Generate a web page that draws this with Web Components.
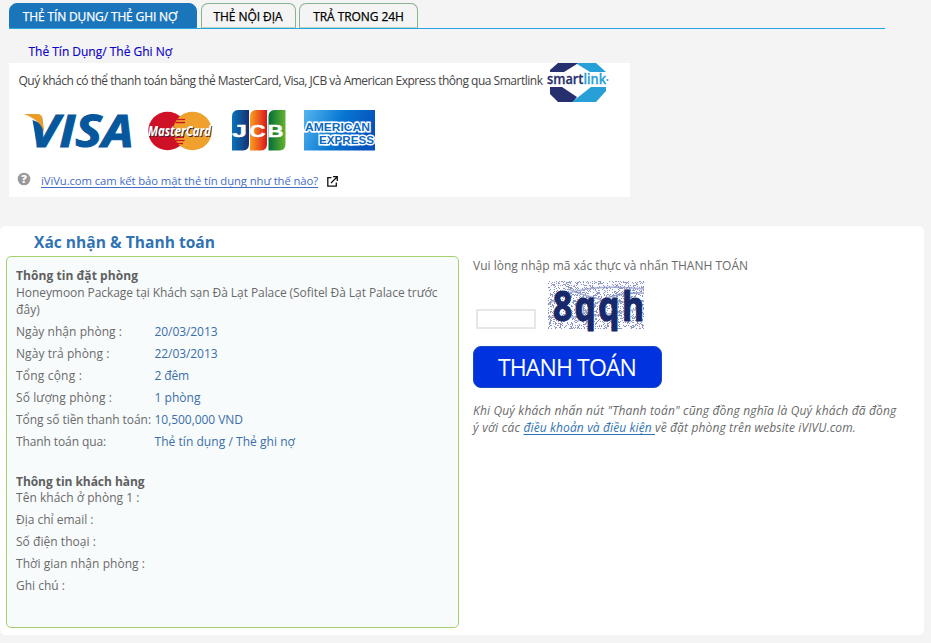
<!DOCTYPE html>
<html lang="vi">
<head>
<meta charset="utf-8">
<title>Thanh toán</title>
<style>
body{margin:0;background:#f4f4f4;font:12px "Open Sans","Noto Sans",sans-serif;color:#6a6a6a;width:931px;height:643px;overflow:hidden}
</style>
</head>
<body>
<payment-page></payment-page>
<script>
// One line of text whose tracking is adjusted to fill the measure given in "w".
class TextLine extends HTMLElement{
  connectedCallback(){
    const r=this.attachShadow({mode:'open'});
    r.innerHTML='<style>:host{display:block;white-space:pre}span{display:inline-block;text-decoration:inherit;text-underline-offset:inherit}</style><span><slot></slot></span>';
    const s=r.querySelector('span'),w=+this.getAttribute('w');
    if(w){const n=this.textContent.length;s.style.letterSpacing=((w-s.getBoundingClientRect().width)/n).toFixed(4)+'px';}
  }
}

class TabItem extends HTMLElement{
  connectedCallback(){
    this.attachShadow({mode:'open'}).innerHTML=`<style>
    :host{display:flex;box-sizing:border-box;height:25px;border:1px solid #86b48e;border-bottom-color:#b9d3bd;border-radius:7px 7px 0 0;color:#000;justify-content:center;font-weight:500;font-size:12px;line-height:25px;background:#f4f4f4;-webkit-text-stroke:.25px}
    :host([active]){background:#1b75bb;border-color:#1b75bb;color:#fff;border-radius:8px 8px 0 0;padding-right:6px}
    </style><slot></slot>`;
  }
}

class TabBar extends HTMLElement{
  connectedCallback(){
    this.attachShadow({mode:'open'}).innerHTML=`<style>
    :host{display:grid;grid-template-columns:188px 95px 119px;column-gap:3.5px;width:876px;height:26px;box-sizing:border-box;border-bottom:1px solid #27a4e4}
    </style>
    <tab-item active><text-line w="154.5">THẺ TÍN DỤNG/ THẺ GHI NỢ</text-line></tab-item>
    <tab-item><text-line w="69">THẺ NỘI ĐỊA</text-line></tab-item>
    <tab-item><text-line w="90.5">TRẢ TRONG 24H</text-line></tab-item>`;
  }
}

class SmartlinkLogo extends HTMLElement{
  connectedCallback(){
    this.attachShadow({mode:'open'}).innerHTML=`<style>:host{display:block;height:40px}svg{display:block;overflow:visible}</style>
    <svg width="64" height="40" viewBox="545 63 64 40">
    <path fill="#27306f" d="M558 63h20l-7 9h-21v-2z"/><path fill="#27a0d8" d="M578 63h18l10 9h-19l-10-7z"/>
    <path fill="#27306f" d="M550 87h12l15 10-4 5h-15l-8-8z"/><path fill="#27a0d8" d="M591 87h15v4l-10 11h-24z"/>
    <path fill="#fff" d="M564 72l13-8 13 8z"/>
    <text x="547" y="84" font-family="Open Sans" font-weight="600" font-size="14.5" fill="#27306f" stroke="#27306f" stroke-width=".3" textLength="59" lengthAdjust="spacingAndGlyphs">smart<tspan fill="#27a0d8" stroke="#27a0d8">link</tspan></text>
    <circle cx="607.5" cy="80" r="1" fill="#27a0d8"/></svg>`;
  }
}

class CardLogos extends HTMLElement{
  connectedCallback(){
    this.attachShadow({mode:'open'}).innerHTML=`<style>:host{display:block;height:50px}svg{display:block;overflow:visible}</style>
    <svg width="370" height="50" viewBox="20 105 370 50" font-family="Open Sans">
    <defs>
    <linearGradient id="b"><stop stop-color="#0a74bb"/><stop offset="1" stop-color="#173072"/></linearGradient>
    <linearGradient id="r"><stop stop-color="#f9a01b"/><stop offset=".55" stop-color="#ea5520"/><stop offset="1" stop-color="#d8141c"/></linearGradient>
    <linearGradient id="g"><stop stop-color="#006d3a"/><stop offset="1" stop-color="#65b32e"/></linearGradient>
    <linearGradient id="a" x2="1" y2=".25"><stop stop-color="#55b5ee"/><stop offset=".55" stop-color="#0877d2"/><stop offset="1" stop-color="#0453bd"/></linearGradient>
    </defs>
    <text x="29.500" y="146.500" font-size="45" font-weight="700" font-style="italic" fill="#07579d" stroke="#07579d" textLength="104" lengthAdjust="spacingAndGlyphs">VISA</text>
    <path fill="#fff" d="M28 111h15.500l-2 13-8-1z"/>
    <path fill="#07579d" d="M32.500 120l3.500 20 6-8 .5-8z"/>
    <path fill="#eb9c27" d="M23.500 114h13c4.500 0 5.500 2 6 5l2 14c-3-9-9-15-21-19z"/>
    <circle cx="167.500" cy="131" r="19.300" fill="#ce1126"/><circle cx="192.500" cy="131" r="19.300" fill="#f0a02c"/>
    <path d="M177 119.500h8M175.500 122.500h9.500M174.500 137.500h9.500M175.500 140.500h9M177 143.500h6" stroke="#ce1126" stroke-width="1.500"/>
    <path d="M180 118h5M178 121h7M178 139h6M178 142h5" stroke="#f0a02c" stroke-width="1"/>
    <text x="148" y="136" font-size="13.500" font-weight="700" font-style="italic" fill="#fff" textLength="63" lengthAdjust="spacingAndGlyphs" style="text-shadow:1px 1px 0 #3a2530">MasterCard</text>
    <path fill="url(#b)" d="M238 110h11v34q0 6-6 6.500h-11v-34q0-6 6-6.500z"/>
    <path fill="url(#r)" d="M256 110h11v34q0 6-6 6.500h-11v-34q0-6 6-6.500z"/>
    <path fill="url(#g)" d="M274.500 110h11v34q0 6-6 6.500h-11v-34q0-6 6-6.500z"/>
    <g font-family="Liberation Sans" font-size="17" font-weight="700" fill="#fff" stroke="#fff" stroke-width=".4">
    <text x="232" y="136.500" textLength="15" lengthAdjust="spacingAndGlyphs">J</text>
    <text x="249.500" y="136.500" textLength="16" lengthAdjust="spacingAndGlyphs">C</text>
    <text x="267.500" y="136.500" textLength="16" lengthAdjust="spacingAndGlyphs">B</text></g>
    <path fill="url(#a)" d="M304 110h71v40.500h-71z"/>
    <g font-family="Liberation Sans" font-size="11.500" font-weight="700" fill="#0a69c3" stroke="#fff" stroke-width="2.800" paint-order="stroke" stroke-linejoin="miter">
    <text x="305" y="130.500" textLength="65" lengthAdjust="spacingAndGlyphs">AMERICAN</text>
    <text x="319" y="144" textLength="55" lengthAdjust="spacingAndGlyphs">EXPRESS</text></g>
    </svg>`;
  }
}

class MethodPanel extends HTMLElement{
  connectedCallback(){
    this.attachShadow({mode:'open'}).innerHTML=`<style>
    :host{display:grid;grid-template-rows:42px 50px 41px;width:621px;height:133.500px;background:#fff}
    .t{display:flex;gap:2px;color:#444;padding-left:9.5px}.t text-line{line-height:36px}
    card-logos{padding-left:11px}
    .q{display:flex;align-items:flex-start;padding:16px 0 0 8px}
    .q text-line{font-size:11.3px;line-height:20px;color:#446cc8;text-decoration:underline;text-decoration-skip-ink:none;text-underline-offset:2px;margin:0 9px 0 10px}
    .q svg{overflow:visible}.q svg:first-child{margin-top:1px}.q svg:last-child{margin-top:5px}
    </style>
    <div class="t"><text-line w="524">Quý khách có thể thanh toán bằng thẻ MasterCard, Visa, JCB và American Express thông qua Smartlink</text-line><smartlink-logo></smartlink-logo></div>
    <card-logos></card-logos>
    <div class="q"><svg width="14" height="14"><circle cx="7" cy="7" r="6.300" fill="#999"/><text x="7" y="11" text-anchor="middle" font-family="Open Sans" font-size="11" font-weight="800" fill="#fff">?</text></svg>
    <text-line w="277">iViVu.com cam kết bảo mật thẻ tín dụng như thế nào?</text-line>
    <svg width="11" height="11" fill="none" stroke="#111" stroke-width="1.300"><path d="M4.500 1.700H.8v8.500h8.500V6.500M6 .7h4.300V5M10 1L4 7"/></svg></div>`;
  }
}

class DetailRow extends HTMLElement{
  connectedCallback(){
    this.attachShadow({mode:'open'}).innerHTML=`<style>:host{display:grid;grid-template-columns:138.500px 1fr;height:22px;line-height:22px}::slotted([slot=value]){color:#3a6ea9}</style><slot></slot><slot name="value"></slot>`;
  }
}

class BookingBox extends HTMLElement{
  connectedCallback(){
    const row=(l,w,v,x)=>`<detail-row><text-line w="${w}">${l}</text-line>${v?`<text-line slot="value" w="${x}">${v}</text-line>`:''}</detail-row>`;
    this.attachShadow({mode:'open'}).innerHTML=`<style>
    :host{display:block;box-sizing:border-box;width:453px;height:372px;border:1px solid #a6d06c;border-radius:5px;background:#f7fbfc;padding:11px 9px}
    .h{font-weight:700;line-height:16px;color:#606060}
    .p{line-height:17px}.b{margin-bottom:3px}.g{margin-top:21px}
    </style>
    <text-line class="h" w="122">Thông tin đặt phòng</text-line>
    <text-line class="p" w="421.5">Honeymoon Package tại Khách sạn Đà Lạt Palace (Sofitel Đà Lạt Palace trước</text-line>
    <text-line class="p b" w="24">đây)</text-line>
    ${row('Ngày nhận phòng :',106,'20/03/2013',63)}${row('Ngày trả phòng :',93.5,'22/03/2013',63)}${row('Tổng cộng :',66,'2 đêm',34.5)}${row('Số lượng phòng :',96,'1 phòng',46)}${row('Tổng số tiền thanh toán:',135,'10,500,000 VND',88.5)}${row('Thanh toán qua:',90,'Thẻ tín dụng / Thẻ ghi nợ',140.5)}
    <text-line class="h g" w="128.5">Thông tin khách hàng</text-line>
    <div style="margin-top:-3px">${row('Tên khách ở phòng 1 :',123.5)}${row('Địa chỉ email :',77.5)}${row('Số điện thoại :',80)}${row('Thời gian nhận phòng :',129)}${row('Ghi chú :',49)}</div>`;
  }
}

class CaptchaImage extends HTMLElement{
  connectedCallback(){
    // Seeded noise, so that every load draws the same speckles.
    let s=77,d='';const rnd=()=>(s=(s*16807)%2147483647)/2147483647;
    for(let i=0;i<1500;i++){const x=Math.floor(rnd()*96),y=Math.floor(rnd()*48);d+=`M${x} ${y}h1v1h-1z`;}
    this.attachShadow({mode:'open'}).innerHTML=`<style>:host{display:block;height:48px}svg{display:block;overflow:visible}</style>
    <svg width="96" height="48" viewBox="0 0 96 48"><path d="M0 0h96v48H0z" fill="#fafaff"/>
    <path d="${d}" fill="#6674ab" opacity=".75"/>
    <path d="M0 24Q25 1 96 8M30 40Q50 10 96 12M20 8Q60 25 96 20M35 15V40M0 36Q40 38 92 28" fill="none" stroke="#8791c0" stroke-width="1.500" opacity=".7"/>
    <text transform="translate(5 39.5) scale(.8 1)" font-family="Open Sans" font-size="42" font-weight="700" fill="#17296a" stroke="#17296a" stroke-width="1.200" letter-spacing="3">8qqh</text></svg>`;
  }
}

class ConfirmForm extends HTMLElement{
  connectedCallback(){
    this.attachShadow({mode:'open'}).innerHTML=`<style>
    :host{display:block}
    .lead{line-height:20px}
    .c{display:flex;align-items:flex-end;gap:12px;height:48px;margin:5px 0 17px 3px}
    input{box-sizing:border-box;width:60px;height:20px;border:2px solid #e7e7e7;padding:0;background:#fff}
    button{display:block;box-sizing:border-box;width:189px;height:42px;border:1px solid #174bbd;border-radius:8px;background:#0033df;color:#fff;font:23px/41px "Open Sans",sans-serif;padding:0 0 0 24px;text-align:left;margin-bottom:14px}
    .n{font-style:italic;line-height:17px;display:flex}
    a{color:#2f73b4}
    a text-line{text-decoration:underline;text-decoration-skip-ink:none;text-underline-offset:2px}
    </style>
    <text-line class="lead" w="275">Vui lòng nhập mã xác thực và nhấn THANH TOÁN</text-line>
    <div class="c"><input aria-label="Mã xác thực"><captcha-image></captcha-image></div>
    <button><text-line w="138">THANH TOÁN</text-line></button>
    <div class="n"><text-line w="423.5">Khi Quý khách nhấn nút "Thanh toán" cũng đồng nghĩa là Quý khách đã đồng</text-line></div>
    <div class="n"><text-line w="50.5">ý với các </text-line><a><text-line w="131.5">điều khoản và điều kiện </text-line></a><text-line w="201">về đặt phòng trên website iVIVU.com.</text-line></div>`;
  }
}

class PaymentPage extends HTMLElement{
  connectedCallback(){
    this.attachShadow({mode:'open'}).innerHTML=`<style>
    :host{display:flex;flex-direction:column;padding-top:3px}
    tab-bar{margin-left:9px}
    .s{color:#0b00c9;font-weight:500;line-height:18px;margin:14px 0 2px 28.5px;-webkit-text-stroke:.15px}
    method-panel{margin-left:9px}
    section{box-sizing:border-box;width:924px;height:409px;margin-top:29.500px;background:#fff;border-radius:6px}
    .title{font-size:15.5px;font-weight:700;color:#2f73b4;line-height:32px;height:30px;padding-left:34px}
    .cols{display:grid;grid-template-columns:453px 1fr;column-gap:14px;padding-left:6px}
    </style>
    <tab-bar></tab-bar>
    <text-line class="s" w="143.5">Thẻ Tín Dụng/ Thẻ Ghi Nợ</text-line>
    <method-panel></method-panel>
    <section><text-line class="title" w="181">Xác nhận &amp; Thanh toán</text-line>
    <div class="cols"><booking-box></booking-box><confirm-form></confirm-form></div></section>`;
  }
}

for(const [n,c] of Object.entries({'text-line':TextLine,'tab-item':TabItem,'tab-bar':TabBar,'smartlink-logo':SmartlinkLogo,'card-logos':CardLogos,'method-panel':MethodPanel,'detail-row':DetailRow,'booking-box':BookingBox,'captcha-image':CaptchaImage,'confirm-form':ConfirmForm,'payment-page':PaymentPage}))customElements.define(n,c);
</script>
</body>
</html>
